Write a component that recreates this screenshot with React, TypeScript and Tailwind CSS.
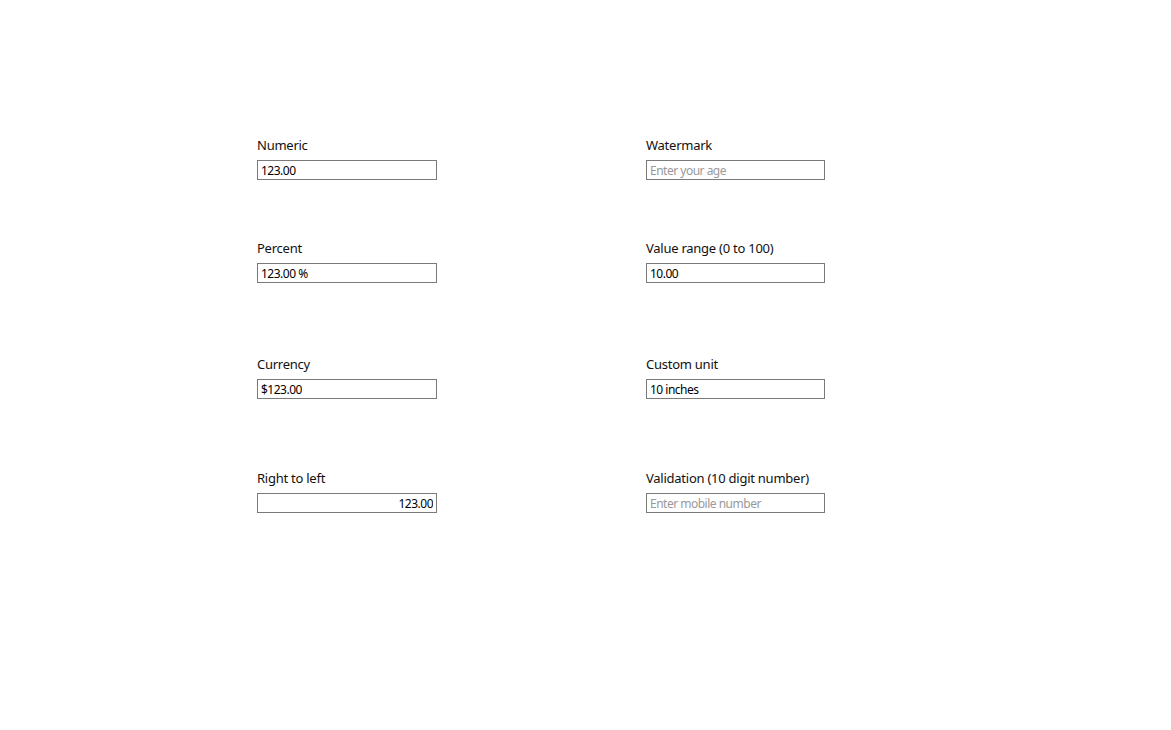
import React from "react";

const font = { fontFamily: '"Noto Sans", "Open Sans", "Liberation Sans", sans-serif' };

function Field({ label, value, placeholder, rtl, w = "w-[180px]" }: { label: string; value?: string; placeholder?: string; rtl?: boolean; w?: string }) {
  return (
    <div className="flex flex-col">
      <label className="text-[13px] leading-[16px] text-[#111] mb-[7px] tracking-[-0.25px]">{label}</label>
      <input
        className={`${w} h-[20px] border border-[#7a7a7a] bg-white px-[3px] text-[12px] leading-[18px] text-black tracking-[-0.5px] outline-none placeholder:text-[#999] ${rtl ? "text-right" : "text-left"}`}
        defaultValue={value}
        placeholder={placeholder}
        readOnly
      />
    </div>
  );
}

export default function App() {
  return (
    <div className="w-[1171px] h-[730px] bg-white" style={font}>
      <div className="pt-[137px] pl-[257px] flex flex-col">
        <div className="grid grid-cols-[389px_179px]">
          <Field label="Numeric" value="123.00" />
          <Field label="Watermark" placeholder="Enter your age" w="w-[179px]" />
        </div>
        <div className="grid grid-cols-[389px_179px] mt-[60px]">
          <Field label="Percent" value="123.00 %" />
          <Field label="Value range (0 to 100)" value="10.00" w="w-[179px]" />
        </div>
        <div className="grid grid-cols-[389px_179px] mt-[73px]">
          <Field label="Currency" value="$123.00" />
          <Field label="Custom unit" value="10 inches" w="w-[179px]" />
        </div>
        <div className="grid grid-cols-[389px_179px] mt-[71px]">
          <Field label="Right to left" value="123.00" rtl />
          <Field label="Validation (10 digit number)" placeholder="Enter mobile number" w="w-[179px]" />
        </div>
      </div>
    </div>
  );
}
